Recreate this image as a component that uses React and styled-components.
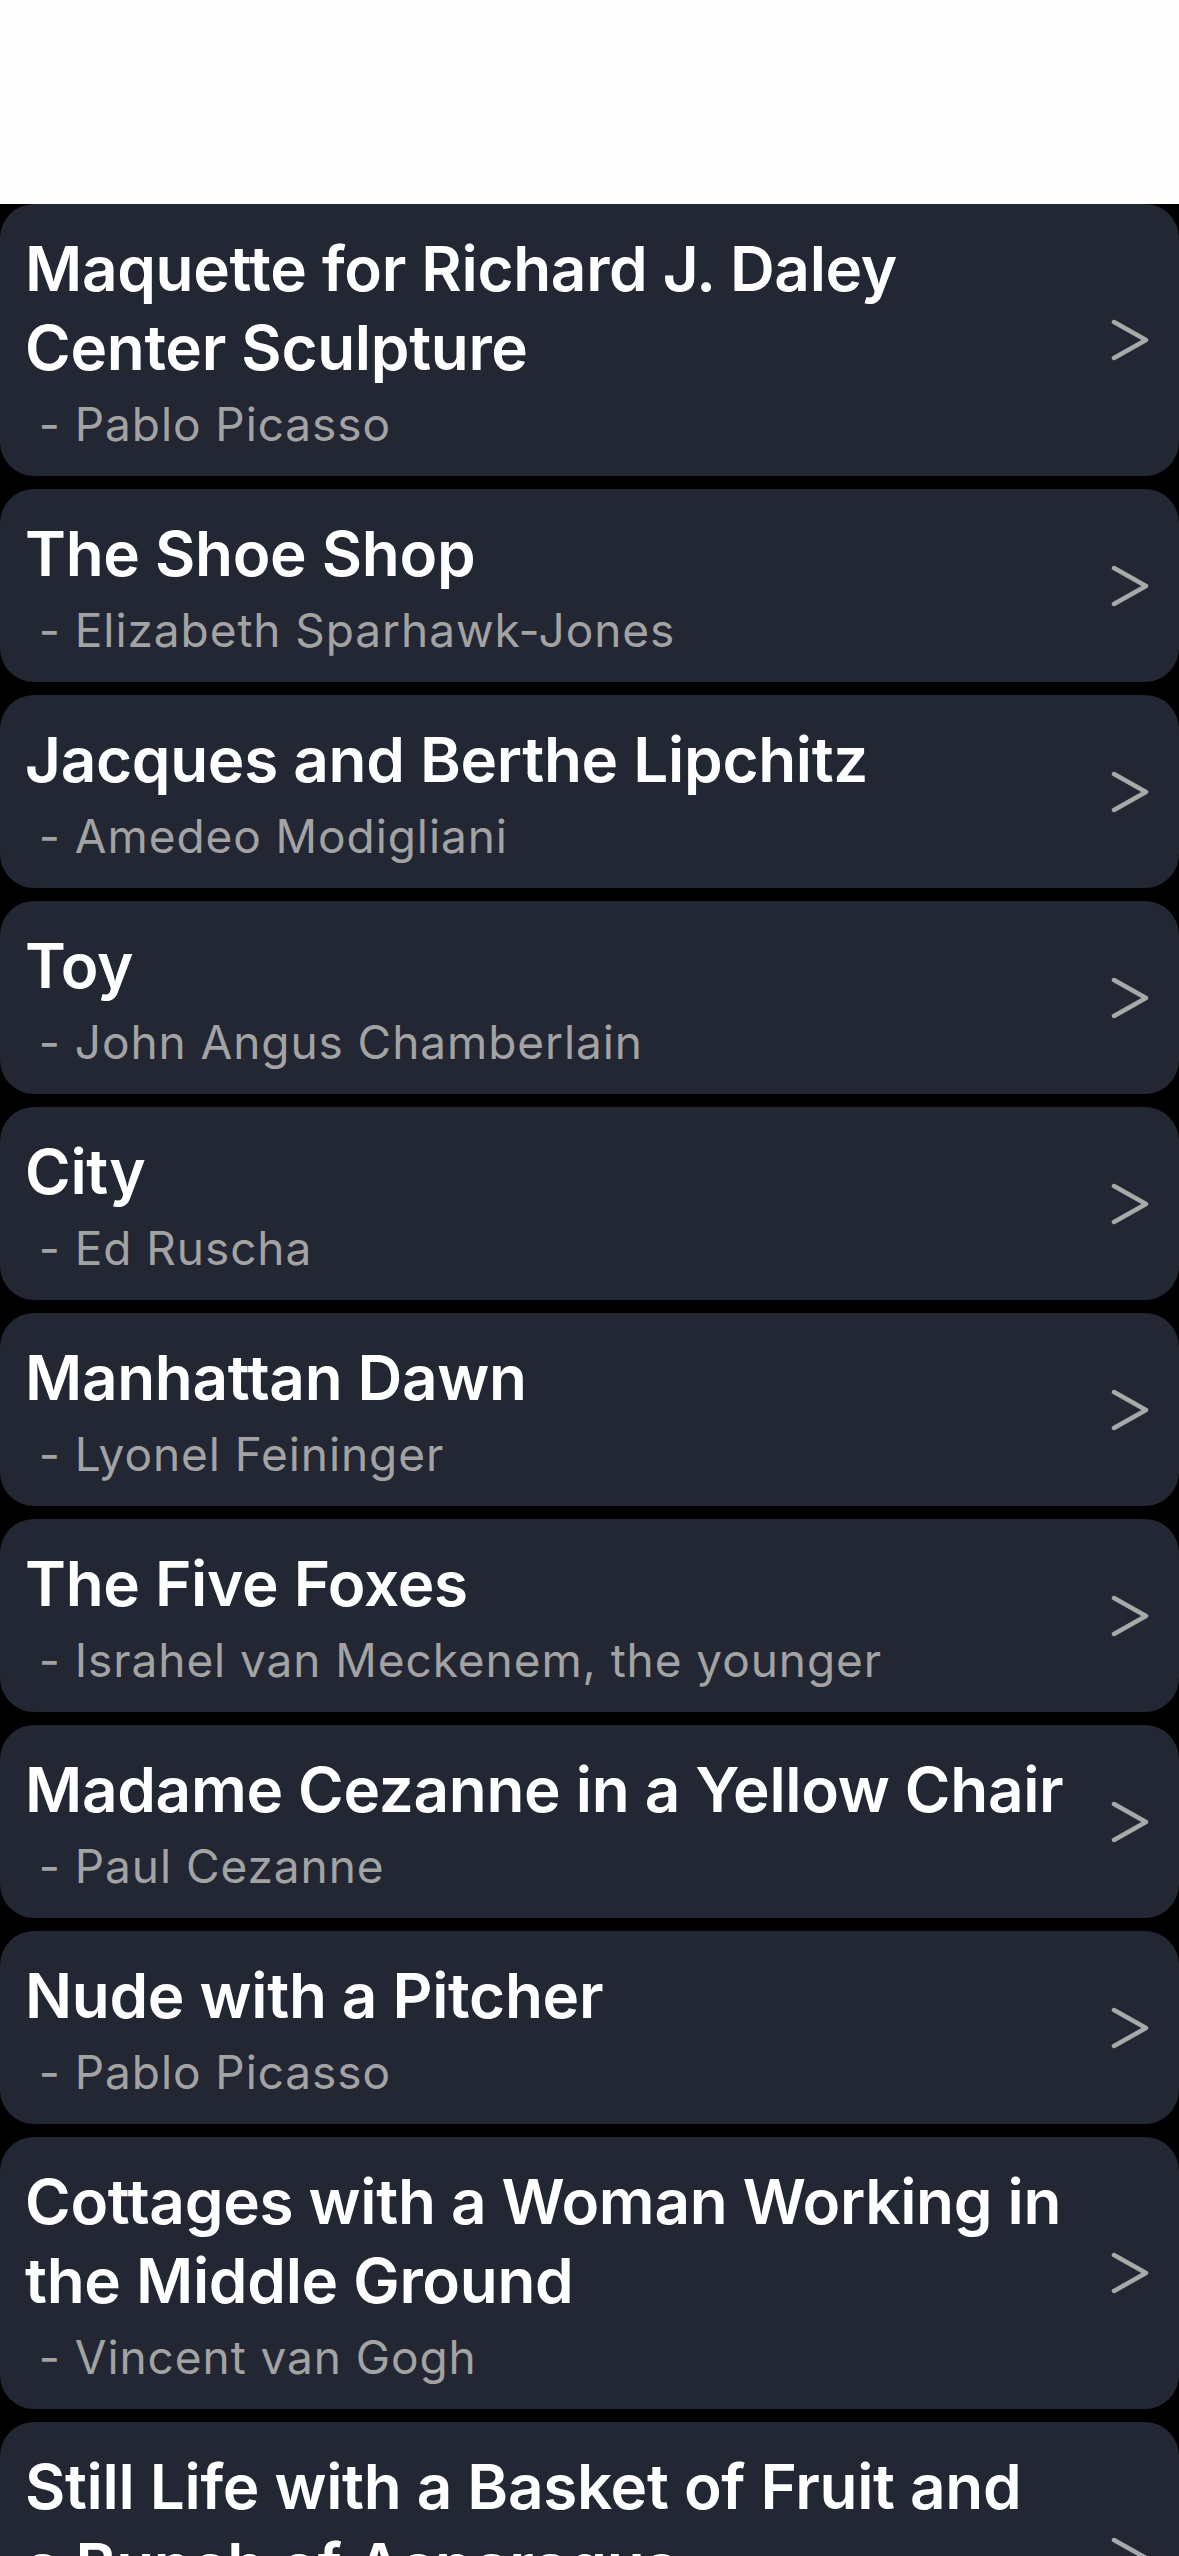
import React from 'react';
import styled, { createGlobalStyle } from 'styled-components';

const GlobalStyle = createGlobalStyle`
  html, body {
    margin: 0;
    padding: 0;
    background: #000000;
  }
  body {
    font-family: Inter, "Noto Sans", "Liberation Sans", sans-serif;
    -webkit-font-smoothing: antialiased;
  }
`

const Page = styled.div`
  display: flex;
  flex-direction: column;
  width: 1179px;
  min-height: 100vh;
  background: #000000;
`
const Header = styled.div`
  height: 204px;
  background: #fefefe;
`
const List = styled.div`
  display: flex;
  flex-direction: column;
  gap: 13px;
`
const Card = styled.div`
  display: flex;
  align-items: center;
  gap: 46px;
  padding: 25px 30px 25px 25px;
  background: #222733;
  border-radius: 34px;
`
const Body = styled.div`
  flex: 1;
  min-width: 0;
  display: flex;
  flex-direction: column;
  gap: 10px;
`
const Title = styled.div`
  color: #ffffff;
  font-size: 62px;
  font-weight: 600;
  line-height: 79px;
  letter-spacing: -0.3px;
`
const Artist = styled.div`
  color: #a3a3a4;
  font-size: 46px;
  font-weight: 400;
  line-height: 54px;
  letter-spacing: 0.02em;
  white-space: pre-wrap;
`
const Chevron = styled.svg`
  flex: none;
  width: 38px;
  height: 42px;
`

const artworks = [
  { title: 'Maquette for Richard J. Daley Center Sculpture', artist: 'Pablo Picasso' },
  { title: 'The Shoe Shop', artist: 'Elizabeth Sparhawk-Jones' },
  { title: 'Jacques and Berthe Lipchitz', artist: 'Amedeo Modigliani' },
  { title: 'Toy', artist: 'John Angus Chamberlain' },
  { title: 'City', artist: 'Ed Ruscha' },
  { title: 'Manhattan Dawn', artist: 'Lyonel Feininger' },
  { title: 'The Five Foxes', artist: 'Israhel van Meckenem, the younger' },
  { title: 'Madame Cezanne in a Yellow Chair', artist: 'Paul Cezanne' },
  { title: 'Nude with a Pitcher', artist: 'Pablo Picasso' },
  { title: 'Cottages with a Woman Working in the Middle Ground', artist: 'Vincent van Gogh' },
  { title: 'Still Life with a Basket of Fruit and a Bunch of Asparagus', artist: 'Adriaen Coorte' },
]

function ArtworkRow({ title, artist }) {
  return (
    <Card>
      <Body>
        <Title>{title}</Title>
        <Artist>{' - ' + artist}</Artist>
      </Body>
      <Chevron viewBox="0 0 38 42" fill="none">
        <polyline
          points="3,3 35,21 3,39"
          stroke="#a9a9aa"
          strokeWidth="4.5"
          strokeLinecap="round"
          strokeLinejoin="round"
        />
      </Chevron>
    </Card>
  )
}

export default function App() {
  return (
    <Page>
      <GlobalStyle />
      <Header />
      <List>
        {artworks.map((a, i) => (
          <ArtworkRow key={i} title={a.title} artist={a.artist} />
        ))}
      </List>
    </Page>
  )
}
